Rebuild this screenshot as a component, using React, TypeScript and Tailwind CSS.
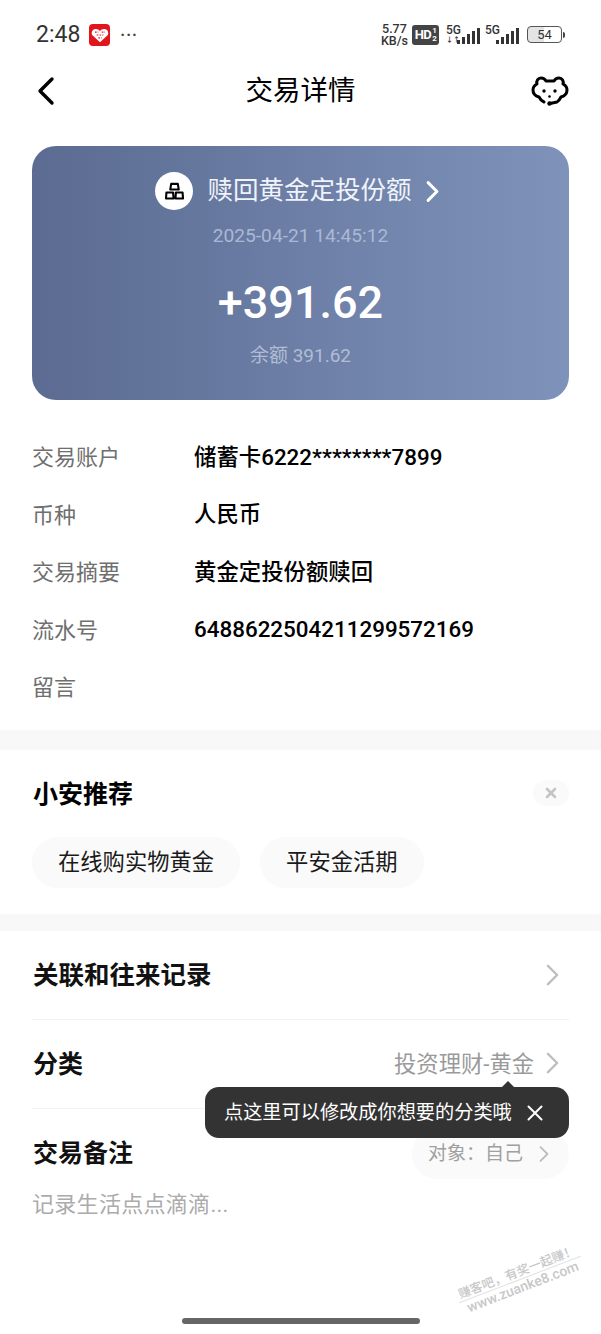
const font = "font-['Roboto','Noto_Sans_CJK_SC',sans-serif]";

function Chevron({ className = "", weight = 2.6 }: { className?: string; weight?: number }) {
  return (
    <svg viewBox="0 0 16 26" fill="none" stroke="currentColor" strokeWidth={weight} strokeLinecap="round" strokeLinejoin="round" className={className}>
      <path d="M3 3l10 10L3 23" />
    </svg>
  );
}

function Signal({ arrows = false }: { arrows?: boolean }) {
  const bars = [4, 7, 10, 13, 16];
  return (
    <div className="relative flex h-[19px] w-[34px] items-end justify-end gap-[2px]">
      <span className="absolute left-0 top-0 text-[12px] font-medium leading-[11px]">5G</span>
      {arrows && <span className="absolute bottom-0 left-0 text-[7px] font-bold leading-[7px]">↓↑</span>}
      {bars.map((h, i) => (
        <div key={i} className="w-[3px] bg-[#333]" style={{ height: h }} />
      ))}
    </div>
  );
}

function StatusBar() {
  return (
    <div className="flex h-[68px] items-center justify-between pl-[36px] pr-[36px] pt-[1px] text-[#333]">
      <div className="flex items-center">
        <span className="text-[23px] leading-none">2:48</span>
        <div className="ml-[9px] flex h-[22px] w-[21px] items-center justify-center rounded-[4px] bg-[#e2141c]">
          <svg viewBox="0 0 16 16" className="h-[18px] w-[18px]" fill="#fff">
            <path d="M8 14.500L1.500 8.500C0 7 .4 3.600 3 2.800 5 2.200 7 3 8 4.600 9 3 11 2.200 13 2.800c2.600.8 3 4.200 1.500 5.700z" />
            <path d="M3.500 5.500h3M9.500 5.500h3M5 8h6M6.500 10.500h3" stroke="#e2141c" strokeWidth="1.100" strokeDasharray="1.500 1" />
          </svg>
        </div>
        <span className="ml-[10px] text-[16px] font-bold leading-none tracking-[1px] text-[#444]">···</span>
      </div>
      <div className="flex items-center">
        <div className="text-center text-[12.500px] font-medium leading-[12px]">
          <div>5.77</div>
          <div>KB/s</div>
        </div>
        <div className="ml-[4px] flex h-[20px] w-[27px] items-center justify-center rounded-[3px] bg-[#444] text-[13px] font-bold leading-none tracking-[-0.5px] text-white">
          HD
          <span className="ml-[1px] flex flex-col text-[8px] leading-[8px]">
            <span>1</span>
            <span>2</span>
          </span>
        </div>
        <div className="ml-[7px]">
          <Signal arrows />
        </div>
        <div className="ml-[5px]">
          <Signal />
        </div>
        <div className="ml-[8px] flex items-center">
          <div className="flex h-[17px] w-[35px] items-center justify-center rounded-[4px] border border-[#555] bg-gradient-to-r from-[#e4e4e4] from-50% to-white to-50% text-[13px] leading-none">
            54
          </div>
          <div className="ml-[1px] h-[6px] w-[2px] rounded-r bg-[#444]" />
        </div>
      </div>
    </div>
  );
}

function NavBar() {
  return (
    <div className="grid h-[46px] grid-cols-[1fr_auto_1fr] items-center px-[31px] text-black">
      <svg viewBox="0 0 20 30" fill="none" stroke="currentColor" strokeWidth="3.400" strokeLinecap="round" strokeLinejoin="round" className="ml-[5px] h-[30px] w-[20px]">
        <path d="M16 3L4 15l12 12" />
      </svg>
      <h1 className="text-[27.500px] font-normal leading-none">交易详情</h1>
      <svg viewBox="6 6 40 32" fill="none" stroke="currentColor" strokeWidth="3" strokeLinecap="round" strokeLinejoin="round" className="h-[32px] w-[40px] justify-self-end">
        <path d="M20 33C17.500 32 16 30 15 28 11 27 9 24 9 21 9 18 11 16 13 15 12 12 14 9 17 9 19 9 21 10 22 12L30 12C31 10 33 9 35 9 38 9 40 12 39 15 41 16 43 18 43 21 43 24 41 27 37 28 36 30 35 32 33 33L26 34.500" />
        <circle cx="20" cy="22" r="1.700" fill="currentColor" stroke="none" />
        <circle cx="31" cy="22" r="1.700" fill="currentColor" stroke="none" />
        <circle cx="25.500" cy="27.500" r="1.300" fill="currentColor" stroke="none" />
        <circle cx="25.500" cy="34.500" r="2.200" fill="currentColor" stroke="none" />
      </svg>
    </div>
  );
}

function AmountCard() {
  return (
    <div className="mx-[32px] mt-[32px] flex h-[254px] flex-col items-center rounded-[24px] bg-gradient-to-r from-[#5b6b92] to-[#7f93ba]">
      <div className="mr-[6px] mt-[25px] flex h-[40px] items-center text-white">
        <div className="flex h-[38px] w-[38px] items-center justify-center rounded-full bg-white">
          <svg viewBox="0 0 22 19" fill="none" stroke="#000" strokeWidth="2.200" strokeLinejoin="round" className="h-[18px] w-[21px]">
            <path d="M7.500 2h7l1 6h-9zM2.500 11h7l.5 6.500H2zM12.500 11h7l.5 6.500h-8z" />
          </svg>
        </div>
        <span className="ml-[14px] text-[25.500px] leading-none text-[#f0f3f9]">赎回黄金定投份额</span>
        <Chevron weight={3.4} className="ml-[13px] h-[23px] w-[15px]" />
      </div>
      <div className="mt-[13px] text-[19.200px] leading-[24px] text-[#aab8d6]">2025-04-21 14:45:12</div>
      <div className="mt-[29px] text-[45px] font-medium leading-[52px] text-white">+391.62</div>
      <div className="mt-[15px] text-[19px] leading-[24px] text-[#b0bdd6]">余额 391.62</div>
    </div>
  );
}

const details = [
  { label: "交易账户", value: "储蓄卡6222********7899" },
  { label: "币种", value: "人民币" },
  { label: "交易摘要", value: "黄金定投份额赎回" },
  { label: "流水号", value: "6488622504211299572169" },
  { label: "留言", value: "" },
];

function DetailList() {
  return (
    <div className="mt-[29px] flex flex-col px-[32px]">
      {details.map((d) => (
        <div key={d.label} className="flex h-[57.500px] items-center text-[22px]">
          <span className="w-[162px] text-[#6f6f6f]">{d.label}</span>
          <span className="text-[22.400px] font-medium text-black">{d.value}</span>
        </div>
      ))}
    </div>
  );
}

function Recommend() {
  return (
    <div className="px-[32px] pb-[26px] pt-[26px]">
      <div className="flex h-[34px] items-center justify-between">
        <h2 className="ml-[1px] mt-[3px] text-[25px] font-bold leading-none text-black">小安推荐</h2>
        <div className="flex h-[26px] w-[36px] items-center justify-center rounded-full bg-[#fafafa]">
          <svg viewBox="0 0 12 12" stroke="#c4c4c4" strokeWidth="2.600" strokeLinecap="round" className="h-[12px] w-[12px]">
            <path d="M2 2l8 8M10 2l-8 8" />
          </svg>
        </div>
      </div>
      <div className="mt-[27px] flex gap-[20px]">
        {["在线购实物黄金", "平安金活期"].map((t) => (
          <div key={t} className="flex h-[51px] items-center rounded-full bg-[#fafafa] px-[26px] text-[22.300px] leading-none text-[#1a1a1a]">
            {t}
          </div>
        ))}
      </div>
    </div>
  );
}

function Rows() {
  return (
    <div className="px-[32px]">
      <div className="flex h-[89px] items-center justify-between border-b border-[#f2f2f2]">
        <span className="ml-[1px] mt-[3px] text-[25.500px] font-bold leading-none text-[#111]">关联和往来记录</span>
        <Chevron className="mr-[9px] h-[24px] w-[15px] text-[#bdbdbd]" />
      </div>
      <div className="flex h-[89px] items-center justify-between border-b border-[#f2f2f2]">
        <span className="ml-[1px] mt-[2px] text-[25px] font-bold leading-none text-[#111]">分类</span>
        <div className="flex items-center">
          <span className="mt-[2px] text-[22.300px] leading-none text-[#9a9a9a]">投资理财-黄金</span>
          <Chevron className="ml-[11px] mr-[9px] h-[24px] w-[15px] text-[#bdbdbd]" />
        </div>
      </div>
      <div className="flex h-[90px] items-center justify-between">
        <span className="ml-[1px] text-[25px] font-bold leading-none text-[#111]">交易备注</span>
        <div className="flex h-[50px] items-center rounded-full bg-[#fafafa] pl-[16px] pr-[19px] text-[19px] leading-none text-[#a0a0a0]">
          对象：自己
          <Chevron className="ml-[15px] h-[18px] w-[12px] text-[#bdbdbd]" />
        </div>
      </div>
      <div className="mt-[-8px] text-[22px] leading-[28px] tracking-[0.3px] text-[#ababab]">记录生活点点滴滴...</div>
    </div>
  );
}

export default function App() {
  return (
    <div className={`relative h-[1334px] w-[601px] overflow-hidden bg-white ${font}`}>
      <StatusBar />
      <NavBar />
      <AmountCard />
      <DetailList />
      <div className="mt-[13px] h-[20px] bg-[#f8f8f8]" />
      <Recommend />
      <div className="h-[17px] bg-[#f8f8f8]" />
      <Rows />

      {/* guide bubble over the 分类 row */}
      <div className="absolute left-[205px] top-[1087px] flex h-[51px] w-[364px] items-center justify-between rounded-[14px] bg-[#333] pl-[19px] pr-[26px] text-white">
        <div className="absolute left-[297px] top-[-6px] h-0 w-0 border-x-[6px] border-b-[6px] border-x-transparent border-b-[#333]" />
        <span className="text-[19.200px] leading-none">点这里可以修改成你想要的分类哦</span>
        <svg viewBox="0 0 16 16" stroke="#fff" strokeWidth="2" strokeLinecap="round" className="h-[16px] w-[16px]">
          <path d="M1.500 1.500l13 13M14.500 1.500l-13 13" />
        </svg>
      </div>

      {/* site watermark */}
      <div className="absolute left-[455px] top-[1264px] w-[130px] -rotate-[21deg] text-center text-[12.500px] font-medium leading-[15px] text-[#c8c8c8]">
        <div className="whitespace-nowrap border-b border-[#e2e2e2]">赚客吧，有奖一起赚！</div>
        <div className="whitespace-nowrap text-[14px]">www.zuanke8.com</div>
      </div>

      <div className="absolute left-[182px] top-[1318px] h-[6px] w-[238px] rounded-full bg-[#666]" />
    </div>
  );
}
